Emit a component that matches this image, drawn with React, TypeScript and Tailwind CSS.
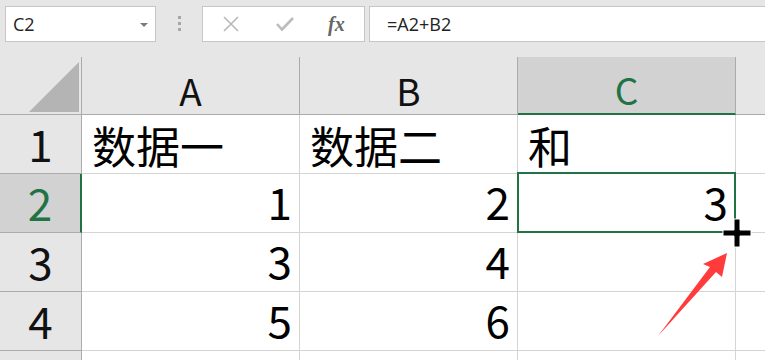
import clsx from 'clsx'

const FONT = { fontFamily: '"Noto Sans CJK SC", "Noto Sans", sans-serif' }
const UI_FONT = { fontFamily: '"Open Sans", "Noto Sans", sans-serif' }

const COLS = ['A', 'B', 'C']
const ROWS: { n: number; cells: [string, string, string] }[] = [
  { n: 1, cells: ['数据一', '数据二', '和'] },
  { n: 2, cells: ['1', '2', '3'] },
  { n: 3, cells: ['3', '4', ''] },
  { n: 4, cells: ['5', '6', ''] },
  { n: 5, cells: ['', '', ''] },
]

function TopBar() {
  return (
    <div className="flex items-start h-[57px] bg-[#e6e6e6] pt-[6px] pl-[5px]" style={UI_FONT}>
      {/* Name box */}
      <div className="relative flex items-center w-[151px] h-[36px] bg-white border border-[#c6c6c6] pl-[7px] text-[18px] text-[#222]">
        C2
        <span className="absolute left-[134px] top-[16px] w-0 h-0 border-l-[4px] border-r-[4px] border-t-[4px] border-l-transparent border-r-transparent border-t-[#7a7a7a]" />
      </div>
      {/* grip dots */}
      <div className="flex flex-col gap-[3px] w-[46px] items-center pt-[10px]">
        <span className="w-[3px] h-[3px] bg-[#a6a6a6]" />
        <span className="w-[3px] h-[3px] bg-[#a6a6a6]" />
        <span className="w-[3px] h-[3px] bg-[#a6a6a6]" />
      </div>
      {/* formula buttons */}
      <div className="flex items-center w-[163px] h-[36px] bg-white border border-[#c6c6c6]">
        <svg width="18" height="16" viewBox="0 0 18 16" className="ml-[19px]">
          <path d="M2 1 L16 15 M16 1 L2 15" stroke="#b8b8b8" strokeWidth="1.6" fill="none" />
        </svg>
        <svg width="20" height="16" viewBox="0 0 20 16" className="ml-[35px]">
          <path d="M2 8 L7 13.5 L18 2" stroke="#bcbcbc" strokeWidth="2.6" fill="none" />
        </svg>
        <span
          className="ml-[33px] text-[20px] italic font-bold text-[#666] leading-none"
          style={{ fontFamily: '"Liberation Serif", "DejaVu Serif", serif' }}
        >
          fx
        </span>
      </div>
      {/* formula input */}
      <div className="flex items-center flex-1 ml-[4px] h-[36px] bg-white border-y border-l border-[#c6c6c6] pl-[17px] text-[18px] text-[#222]">
        =A2+B2
      </div>
    </div>
  )
}

function Grid() {
  return (
    <div
      className="grid grid-cols-[82px_218px_218px_218px_1fr] grid-rows-[58px_59px_59px_59px_59px_59px] bg-white"
      style={FONT}
    >
      {/* header row */}
      <div className="relative bg-[#e6e6e6] border-r border-b border-[#ababab]">
        <svg width="50" height="50" viewBox="0 0 50 50" className="absolute left-[29px] top-[5px]">
          <polygon points="50,0 50,50 0,50" fill="#b4b4b4" />
        </svg>
      </div>
      {COLS.map(c => (
        <div
          key={c}
          className={clsx(
            'flex items-end justify-center pb-[5px] text-[37px] leading-none border-r',
            c === 'C'
              ? 'bg-[#d2d2d2] text-[#217346] border-b-2 border-b-[#217346] border-r-[#ababab]'
              : 'bg-[#e6e6e6] text-[#111] border-b border-[#ababab]'
          )}
        >
          {c}
        </div>
      ))}
      <div className="bg-[#e6e6e6] border-b border-[#ababab]" />

      {/* body rows */}
      {ROWS.map(r => (
        <Row key={r.n} n={r.n} cells={r.cells} />
      ))}
    </div>
  )
}

function Row({ n, cells }: { n: number; cells: [string, string, string] }) {
  const active = n === 2
  return (
    <>
      <div
        className={clsx(
          'flex items-end justify-center pb-[8px] text-[44px] leading-none border-b',
          active
            ? 'bg-[#d2d2d2] text-[#217346] border-r-2 border-r-[#217346] border-b-[#ababab]'
            : 'bg-[#e6e6e6] text-[#111] border-r border-[#ababab]'
        )}
      >
        {n < 5 ? n : ''}
      </div>
      {cells.map((v, i) => {
        const isNum = v !== '' && !isNaN(Number(v))
        const selected = active && i === 2
        return (
          <div
            key={i}
            className={clsx(
              'relative flex items-end text-[44px] leading-none text-black border-r border-b border-[#d4d4d4]',
              isNum ? 'justify-end pr-[7px] pb-[9px]' : 'pl-[10px] pb-[6px]'
            )}
          >
            {v}
            {selected && (
              <div className="absolute -left-px -top-[2px] -right-px -bottom-px border-2 border-[#217346] pointer-events-none" />
            )}
          </div>
        )
      })}
      <div className="border-b border-[#d4d4d4]" />
    </>
  )
}

export default function App() {
  return (
    <div className="relative w-[765px] h-[360px] overflow-hidden bg-white">
      <TopBar />
      <Grid />
      {/* fill cursor */}
      <svg width="30" height="30" viewBox="0 0 30 30" className="absolute left-[722px] top-[218px]">
        <path d="M12 1 H18 V12 H29 V18 H18 V29 H12 V18 H1 V12 H12 Z" fill="#000" stroke="#fff" strokeWidth="1" />
      </svg>
      {/* red arrow */}
      <svg width="765" height="360" className="absolute left-0 top-0 pointer-events-none">
        <polygon points="658,336 710,267 703,264 727,253 722,277 716,272" fill="#ff3b3b" />
      </svg>
    </div>
  )
}
